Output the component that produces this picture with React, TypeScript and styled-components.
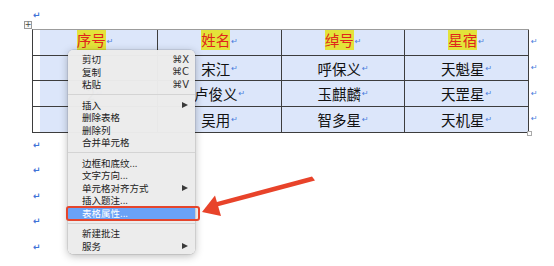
import styled, { createGlobalStyle } from 'styled-components';

const GlobalStyle = createGlobalStyle`
  html, body {
    margin: 0;
    padding: 0;
    background: #ffffff;
  }
  body {
    font-family: 'Noto Sans CJK SC', 'Noto Sans', sans-serif;
  }
`;

const Page = styled.div`
  position: relative;
  width: 554px;
  height: 266px;
  overflow: hidden;
  padding: 9px 0 0 32px;
  box-sizing: border-box;
`;

const Mark = styled.div`
  height: ${(p: { $h?: number }) => p.$h ?? 25.5}px;
  display: flex;
  align-items: center;
  padding-left: 1px;
  color: #3f74d8;
  font-family: 'DejaVu Sans', sans-serif;
  font-size: 9px;
  font-weight: bold;
`;

const TableRow = styled.div`
  display: flex;
  align-items: flex-start;
  margin-top: 8px;
`;

const TableWrap = styled.div`
  position: relative;
`;

const Grid = styled.div`
  display: grid;
  grid-template-columns: 125px 124px 123px 124px;
  grid-template-rows: 26px 25px 26px 26px;
  border-left: 1px solid #3d3d3d;
  border-top: 1.5px solid #9c9c9c;
  box-sizing: border-box;
`;

const Cell = styled.div<{ $first?: boolean }>`
  display: flex;
  align-items: center;
  justify-content: center;
  gap: 1px;
  border-right: 1px solid #3d3d3d;
  border-bottom: 1px solid #3d3d3d;
  background: ${(p) =>
    p.$first ? 'linear-gradient(to right, #ffffff 7px, #dce6fa 7px)' : '#dce6fa'};
  font-size: 14.5px;
  color: #111;
`;

const HeadText = styled.span`
  background: #e3e33a;
  color: #e0251b;
  line-height: 20px;
  margin-top: -5px;
`;

const CellMark = styled.span`
  color: #4a7ddc;
  font-family: 'DejaVu Sans', sans-serif;
  font-size: 8px;
  align-self: center;
  margin-top: ${(p: { $up?: boolean }) => (p.$up ? '-3px' : '0')};
`;

const PlusHandle = styled.div`
  position: absolute;
  left: -8px;
  top: -8px;
  width: 8px;
  height: 8px;
  border: 1px solid #9a9a9a;
  background: #f7f7f7;
  box-sizing: border-box;
  display: flex;
  align-items: center;
  justify-content: center;
  font-family: 'DejaVu Sans', sans-serif;
  font-size: 8px;
  line-height: 1;
  color: #444;
`;

const SizeHandle = styled.div`
  position: absolute;
  right: -3px;
  bottom: -3px;
  width: 3px;
  height: 3px;
  border: 1px solid #aaa;
  background: #fff;
`;

const RowMarks = styled.div`
  display: flex;
  flex-direction: column;
  margin-left: 2px;
`;

const RowMark = styled.div`
  height: 25.7px;
  display: flex;
  align-items: center;
  color: #4a7ddc;
  font-family: 'DejaVu Sans', sans-serif;
  font-size: 8px;
`;

const BelowMarks = styled.div`
  display: flex;
  flex-direction: column;
  margin-top: -1px;
`;

const Menu = styled.div`
  position: absolute;
  left: 68px;
  top: 50px;
  width: 127px;
  padding: 3px 0 2px;
  background: rgba(236, 236, 236, 0.98);
  border-radius: 5px;
  box-shadow: 0 2px 8px rgba(0, 0, 0, 0.28), 0 0 0 0.5px rgba(0, 0, 0, 0.15);
  font-family: 'Noto Sans CJK SC', 'Noto Sans', sans-serif;
  font-size: 9.5px;
  color: #222;
`;

const Item = styled.div<{ $active?: boolean }>`
  position: relative;
  height: 12.5px;
  display: flex;
  align-items: center;
  justify-content: space-between;
  padding: 0 6px 0 14px;
  background: ${(p) => (p.$active ? '#6aa2f6' : 'transparent')};
  color: ${(p) => (p.$active ? '#ffffff' : '#222')};

  ${(p) =>
    p.$active &&
    `&::after {
      content: '';
      position: absolute;
      left: -2px;
      right: -5px;
      top: -1px;
      bottom: -1.5px;
      border: 2px solid #e5452c;
      border-radius: 3px;
    }`}
`;

const Shortcut = styled.span`
  font-family: 'DejaVu Sans', sans-serif;
  font-size: 10px;
  color: #333;
`;

const SubArrow = styled.span`
  width: 0;
  height: 0;
  margin-right: 1px;
  border-top: 3.5px solid transparent;
  border-bottom: 3.5px solid transparent;
  border-left: 6px solid #3a3a3a;
`;

const Separator = styled.div`
  height: 8px;
  display: flex;
  align-items: center;
  &::before {
    content: '';
    flex: 1;
    height: 1px;
    background: #d4d4d4;
  }
`;

const ArrowSvg = styled.svg`
  position: absolute;
  left: 0;
  top: 0;
  pointer-events: none;
`;

type MenuEntry =
  | { sep: true }
  | { label: string; shortcut?: string; sub?: boolean; active?: boolean };

const menu: MenuEntry[] = [
  { label: '剪切', shortcut: '⌘X' },
  { label: '复制', shortcut: '⌘C' },
  { label: '粘贴', shortcut: '⌘V' },
  { sep: true },
  { label: '插入', sub: true },
  { label: '删除表格' },
  { label: '删除列' },
  { label: '合并单元格' },
  { sep: true },
  { label: '边框和底纹...' },
  { label: '文字方向...' },
  { label: '单元格对齐方式', sub: true },
  { label: '插入题注...' },
  { label: '表格属性...', active: true },
  { sep: true },
  { label: '新建批注' },
  { label: '服务', sub: true },
];

const header = ['序号', '姓名', '绰号', '星宿'];
const rows = [
  ['1', '宋江', '呼保义', '天魁星'],
  ['2', '卢俊义', '玉麒麟', '天罡星'],
  ['3', '吴用', '智多星', '天机星'],
];

export default function App() {
  return (
    <Page>
      <GlobalStyle />
      <Mark $h={12}>↵</Mark>

      <TableRow>
        <TableWrap>
          <PlusHandle>+</PlusHandle>
          <Grid>
            {header.map((h, i) => (
              <Cell key={h} $first={i === 0}>
                <HeadText>{h}</HeadText>
                <CellMark $up>↵</CellMark>
              </Cell>
            ))}
            {rows.map((r) =>
              r.map((c, i) => (
                <Cell key={c} $first={i === 0}>
                  <span>{c}</span>
                  <CellMark>↵</CellMark>
                </Cell>
              ))
            )}
          </Grid>
          <SizeHandle />
        </TableWrap>
        <RowMarks>
          {header.map((h) => (
            <RowMark key={h}>↵</RowMark>
          ))}
        </RowMarks>
      </TableRow>

      <BelowMarks>
        {[0, 1, 2, 3, 4].map((n) => (
          <Mark key={n}>↵</Mark>
        ))}
      </BelowMarks>

      <Menu>
        {menu.map((m, i) =>
          'sep' in m ? (
            <Separator key={i} />
          ) : (
            <Item key={i} $active={m.active}>
              <span>{m.label}</span>
              {m.shortcut && <Shortcut>{m.shortcut}</Shortcut>}
              {m.sub && <SubArrow />}
            </Item>
          )
        )}
      </Menu>

      <ArrowSvg width="554" height="266" viewBox="0 0 554 266">
        <polygon
          points="312,176.5 315,180.5 217,206.5 215,202.5"
          fill="#e8432a"
        />
        <polygon points="202,212 215,195.5 221,216" fill="#e8432a" />
      </ArrowSvg>
    </Page>
  );
}
